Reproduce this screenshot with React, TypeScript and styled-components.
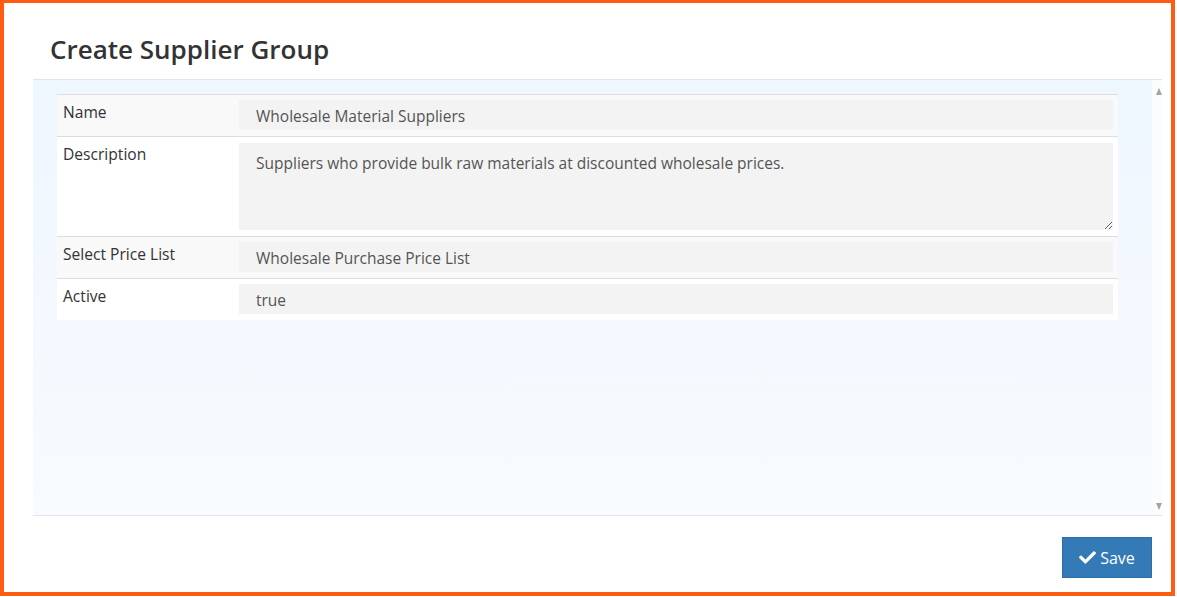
import styled, { createGlobalStyle } from "styled-components";
import { FaCheck } from "react-icons/fa";

const GlobalStyle = createGlobalStyle`
  body {
    margin: 0;
    background: #ffffff;
    font-family: "Open Sans", "Noto Sans", sans-serif;
  }
`;

type Field = {
  label: string;
  value: string;
  multiline?: boolean;
};

const fields: Field[] = [
  { label: "Name", value: "Wholesale Material Suppliers" },
  {
    label: "Description",
    value: "Suppliers who provide bulk raw materials at discounted wholesale prices.",
    multiline: true,
  },
  { label: "Select Price List", value: "Wholesale Purchase Price List" },
  { label: "Active", value: "true" },
];

export default function App() {
  return (
    <>
      <GlobalStyle />
      <Frame>
        <Header>
          <Title>Create Supplier Group</Title>
        </Header>
        <Panel>
          <PanelBody>
            <FormTable>
              <tbody>
                {fields.map((f, i) => (
                  <Row key={f.label} $striped={i % 2 === 0}>
                    <LabelCell>{f.label}</LabelCell>
                    <ValueCell>
                      {f.multiline ? (
                        <TextArea readOnly value={f.value} />
                      ) : (
                        <Input readOnly value={f.value} />
                      )}
                    </ValueCell>
                  </Row>
                ))}
              </tbody>
            </FormTable>
          </PanelBody>
          <ScrollRail>
            <Arrow $dir="up" />
            <Arrow $dir="down" />
          </ScrollRail>
        </Panel>
        <Footer>
          <SaveButton type="button">
            <FaCheck size={17} />
            Save
          </SaveButton>
        </Footer>
      </Frame>
    </>
  );
}

const Frame = styled.div`
  width: 1175px;
  height: 596px;
  box-sizing: border-box;
  border: 4px solid #fd5c12;
  border-top-width: 3px;
  display: flex;
  flex-direction: column;
  background: #ffffff;
`;

const Header = styled.div`
  height: 76px;
  box-sizing: border-box;
  padding: 28px 0 0 46px;
`;

const Title = styled.h2`
  margin: 0;
  font-size: 26px;
  font-weight: 600;
  color: #333333;
`;

const Panel = styled.div`
  height: 437px;
  box-sizing: border-box;
  margin: 0 9px 0 29px;
  display: flex;
  border-top: 1px solid #e2e5e8;
  border-bottom: 1px solid #e2e5e8;
`;

const PanelBody = styled.div`
  flex: 1;
  padding: 14px 34px 0 24px;
  background: linear-gradient(180deg, #eef6fe 0%, #f8fbff 100%);
`;

const ScrollRail = styled.div`
  width: 10px;
  display: flex;
  flex-direction: column;
  justify-content: space-between;
  align-items: flex-end;
  padding: 8px 0 5px;
  background: #fbfcfd;
`;

const Arrow = styled.span<{ $dir: "up" | "down" }>`
  width: 0;
  height: 0;
  border-left: 3.5px solid transparent;
  border-right: 3.5px solid transparent;
  ${({ $dir }) =>
    $dir === "up"
      ? "border-bottom: 7px solid #a3a3a3;"
      : "border-top: 7px solid #a3a3a3;"}
`;

const FormTable = styled.table`
  width: 100%;
  border-collapse: collapse;
`;

const Row = styled.tr<{ $striped: boolean }>`
  background: ${({ $striped }) => ($striped ? "#f9f9f9" : "#ffffff")};
  border-top: 1px solid #dddddd;
`;

const LabelCell = styled.td`
  width: 164px;
  padding: 6px 6px 6px 6px;
  vertical-align: top;
  font-size: 15.6px;
  color: #333333;
`;

const ValueCell = styled.td`
  padding: 5px 5px 6px 6px;
  vertical-align: top;
`;

const Input = styled.input`
  display: block;
  width: 100%;
  height: 30px;
  box-sizing: border-box;
  border: none;
  outline: none;
  padding: 1px 17px 0;
  background: #f3f3f3;
  font-family: "Open Sans", "Noto Sans", sans-serif;
  font-size: 15.5px;
  color: #555555;
`;

const TextArea = styled.textarea`
  display: block;
  width: 100%;
  height: 87px;
  margin-top: 1px;
  box-sizing: border-box;
  border: none;
  outline: none;
  padding: 9px 17px;
  background: #f3f3f3;
  font-family: "Open Sans", "Noto Sans", sans-serif;
  font-size: 15.5px;
  color: #555555;
  resize: vertical;
`;

const Footer = styled.div`
  flex: 1;
  display: flex;
  justify-content: flex-end;
  align-items: flex-start;
  padding: 21px 19px 0 0;
`;

const SaveButton = styled.button`
  width: 90px;
  height: 41px;
  display: flex;
  align-items: center;
  justify-content: center;
  gap: 4px;
  border: 1px solid #2e6da4;
  border-radius: 0;
  background: #337ab7;
  color: #ffffff;
  font-family: "Open Sans", "Noto Sans", sans-serif;
  font-size: 16px;
  cursor: pointer;
`;
